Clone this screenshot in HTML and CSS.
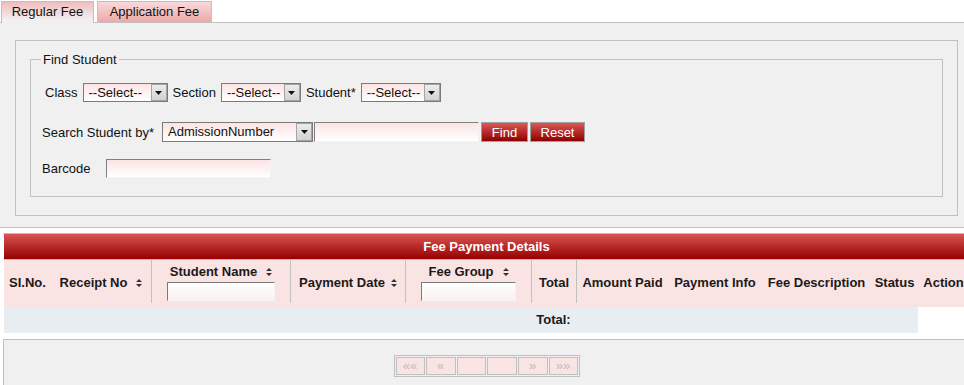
FILE: index.html
```html
<!DOCTYPE html>
<html lang="en">
<head>
  <meta charset="UTF-8">
  <meta name="viewport" content="width=device-width, initial-scale=1.0">
  <title>Fee Payment</title>
  <link rel="stylesheet" href="styles.css">
</head>
<body>
  <div class="tabs">
    <div class="tab active">Regular Fee</div>
    <div class="tab appTab">Application Fee</div>
  </div>

  <div class="tabPanel">
    <div class="searchBox">
      <fieldset class="findStudent">
        <legend>Find Student</legend>

        <div class="formRow rowClass">
          <label>Class</label>
          <div class="select selClass">
            <span class="selText">--Select--</span>
            <span class="selArrow"><svg width="7" height="4" viewBox="0 0 7 4"><path d="M0 0H7L3.5 4Z"/></svg></span>
          </div>
          <label>Section</label>
          <div class="select selSmall">
            <span class="selText">--Select--</span>
            <span class="selArrow"><svg width="7" height="4" viewBox="0 0 7 4"><path d="M0 0H7L3.5 4Z"/></svg></span>
          </div>
          <label>Student*</label>
          <div class="select selSmall">
            <span class="selText">--Select--</span>
            <span class="selArrow"><svg width="7" height="4" viewBox="0 0 7 4"><path d="M0 0H7L3.5 4Z"/></svg></span>
          </div>
        </div>

        <div class="formRow rowSearch">
          <label class="searchLabel">Search Student by*</label>
          <div class="select selSearch">
            <span class="selText">AdmissionNumber</span>
            <span class="selArrow"><svg width="7" height="4" viewBox="0 0 7 4"><path d="M0 0H7L3.5 4Z"/></svg></span>
          </div>
          <input class="textBox searchText" type="text">
          <button class="redButton findBtn">Find</button>
          <button class="redButton resetBtn">Reset</button>
        </div>

        <div class="formRow rowBarcode">
          <label class="barcodeLabel">Barcode</label>
          <input class="textBox barcodeText" type="text">
        </div>
      </fieldset>
    </div>
  </div>

  <div class="feeGrid">
    <div class="gridCaption">Fee Payment Details</div>
    <div class="gridHead">
      <div class="hCell">SI.No.</div>
      <div class="hCell">
        <span>Receipt No<svg class="sortIcon" width="6" height="8" viewBox="0 0 6 8"><path d="M3 0L6 3H0Z M0 5H6L3 8Z"/></svg></span>
      </div>
      <div class="hCell sep filter">
        <span>Student Name<svg class="sortIcon" width="6" height="8" viewBox="0 0 6 8"><path d="M3 0L6 3H0Z M0 5H6L3 8Z"/></svg></span>
        <input class="filterBox nameFilter" type="text">
      </div>
      <div class="hCell sep">
        <span>Payment Date<svg class="sortIcon tight" width="6" height="8" viewBox="0 0 6 8"><path d="M3 0L6 3H0Z M0 5H6L3 8Z"/></svg></span>
      </div>
      <div class="hCell sep filter">
        <span>Fee Group<svg class="sortIcon" width="6" height="8" viewBox="0 0 6 8"><path d="M3 0L6 3H0Z M0 5H6L3 8Z"/></svg></span>
        <input class="filterBox groupFilter" type="text">
      </div>
      <div class="hCell sep">Total</div>
      <div class="hCell sep">Amount Paid</div>
      <div class="hCell">Payment Info</div>
      <div class="hCell">Fee Description</div>
      <div class="hCell">Status</div>
      <div class="hCell">Action</div>
    </div>
    <div class="gridFoot">
      <div class="fCell span5"></div>
      <div class="fCell fTotal">Total:</div>
      <div class="fCell span4"></div>
      <div class="fCell fEmpty"></div>
    </div>
  </div>

  <div class="pagerPanel">
    <div class="pager">
      <span class="pageBtn w29">««</span>
      <span class="pageBtn w30">«</span>
      <span class="pageBtn w29"></span>
      <span class="pageBtn w30"></span>
      <span class="pageBtn w30">»</span>
      <span class="pageBtn w29">»»</span>
    </div>
  </div>
</body>
</html>
```

FILE: styles.css
```css
* {
  box-sizing: border-box;
}

html, body {
  overflow: hidden;
}

body {
  margin: 0;
  font-family: "Liberation Sans", Arial, sans-serif;
  font-size: 13px;
  color: #111;
  background: #fff;
}

/* Tabs */
.tabs {
  display: flex;
  align-items: flex-end;
  gap: 3px;
  height: 23px;
  padding: 1px 0 0 1px;
  border-bottom: 1px solid #c0c0c0;
}

.tab {
  height: 21px;
  line-height: 20px;
  text-align: center;
  border: 1px solid #c0c0c0;
  border-bottom: none;
  background: linear-gradient(#f8dada, #eca9a9);
}

.tab.active {
  width: 93px;
  height: 22px;
  margin-bottom: -1px;
  background: linear-gradient(#f0bdbd, #f0f0f0 85%);
}

.appTab {
  width: 115px;
}

/* Tab content */
.tabPanel {
  background: #f0f0f0;
  padding: 17px 6px 11px 15px;
  border-bottom: 1px solid #c0c0c0;
}

.searchBox {
  border: 1px solid #c0c0c0;
  padding: 11px 14px 18px 14px;
}

.findStudent {
  margin: 0;
  padding: 0 10px 18px 10px;
  border: 1px solid #c0c0c0;
}

.findStudent legend {
  padding: 0 2px;
  line-height: 15px;
}

.formRow {
  display: flex;
  align-items: center;
}

.rowClass {
  margin-top: 16px;
  padding-left: 4px;
  gap: 5px;
}

.rowSearch {
  margin-top: 20px;
  padding-left: 1px;
}

.rowBarcode {
  margin-top: 17px;
  padding-left: 1px;
}

/* Drop downs */
.select {
  display: flex;
  height: 19px;
  border: 1px solid #7a7a7a;
  background: linear-gradient(#fbe3e3, #fff);
}

.selText {
  flex: 1;
  padding-left: 5px;
  line-height: 17px;
  white-space: nowrap;
}

.selArrow {
  display: flex;
  align-items: center;
  justify-content: center;
  width: 16px;
  border: 1px solid #a4a4a4;
  background: linear-gradient(#ececec, #d2d2d2);
}

.selArrow svg {
  fill: #111;
}

.selClass {
  width: 85px;
}

.selSmall {
  width: 80px;
}

.searchLabel {
  width: 120px;
}

.selSearch {
  width: 151px;
  height: 20px;
}

.selSearch .selText {
  line-height: 18px;
}

/* Text boxes */
.textBox {
  margin: 0;
  padding: 0 3px;
  border: 1px solid;
  border-color: #808080 #f4f4f4 #f4f4f4 #808080;
  background: linear-gradient(#fbe4e4, #fff);
  font: inherit;
}

.searchText {
  width: 165px;
  height: 20px;
  margin-left: 1px;
}

.barcodeLabel {
  width: 64px;
}

.barcodeText {
  width: 165px;
  height: 19px;
}

.redButton {
  height: 20px;
  padding: 0;
  border: 1px solid #a0a0a0;
  background: linear-gradient(#dc5757, #8e0000);
  color: #fff;
  font: inherit;
  cursor: pointer;
}

.findBtn {
  width: 47px;
  margin-left: 2px;
}

.resetBtn {
  width: 55px;
  margin-left: 2px;
}

/* Fee payment grid */
.feeGrid {
  width: 966px;
  margin: 5px 0 0 3px;
  padding-left: 1px;
  border-top: 1px solid #c0c0c0;
}

.gridCaption {
  height: 26px;
  line-height: 25px;
  text-align: center;
  font-weight: bold;
  color: #fff;
  background: linear-gradient(#da5454, #960000);
  border-bottom: 1px solid #c9b5b5;
}

.gridHead,
.gridFoot {
  display: grid;
  grid-template-columns: 47px 100px 139px 115px 126px 45px 92px 94px 109px 47px 51px;
}

.gridHead {
  padding-bottom: 4px;
  background: #f9e3e3;
}

.hCell {
  display: flex;
  flex-direction: column;
  align-items: center;
  justify-content: center;
  height: 43px;
  padding-top: 2px;
  font-weight: bold;
  color: #1a1a1a;
  white-space: nowrap;
}

.hCell.sep {
  border-left: 1px solid #c0c0c0;
}

.hCell.filter {
  justify-content: flex-start;
  padding-top: 4px;
  line-height: 15px;
}

.sortIcon {
  margin-left: 9px;
  fill: #333;
}

.sortIcon.tight {
  margin-left: 6px;
}

.filterBox {
  height: 19px;
  margin: 3px 0 0 0;
  padding: 0 3px;
  border: 1px solid;
  border-color: #7a7a7a #f4f4f4 #f4f4f4 #7a7a7a;
  background: linear-gradient(#fff, #fbf0f0);
  font: inherit;
}

.nameFilter {
  width: 108px;
}

.groupFilter {
  width: 95px;
}

.fCell {
  height: 26px;
  line-height: 26px;
  text-align: center;
  background: #e8edf1;
}

.span5 {
  grid-column: span 5;
}

.span4 {
  grid-column: span 4;
}

.fTotal {
  font-weight: bold;
  color: #1a1a1a;
}

.fEmpty {
  background: #fff;
}

/* Pager */
.pagerPanel {
  display: flex;
  justify-content: center;
  width: 966px;
  height: 60px;
  margin: 6px 0 0 3px;
  padding-top: 15px;
  border-top: 1px solid #c0c0c0;
  border-left: 1px solid #c0c0c0;
  background: #f0f0f0;
}

.pager {
  display: flex;
  gap: 1px;
  height: 22px;
  padding: 1px;
  border: 1px solid #c0c0c0;
}

.pageBtn {
  height: 18px;
  line-height: 16px;
  text-align: center;
  font-size: 13px;
  color: #bdbdbd;
  border: 1px solid #c0c0c0;
  background: #f9e3e3;
}

.w29 {
  width: 29px;
}

.w30 {
  width: 30px;
}
```
